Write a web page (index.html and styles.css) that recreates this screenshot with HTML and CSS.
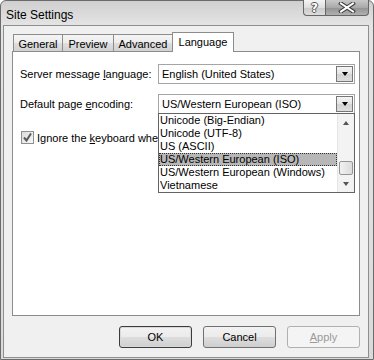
FILE: index.html
```html
<!DOCTYPE html>
<html lang="en">
  <head>
    <meta charset="UTF-8" />
    <meta name="viewport" content="width=device-width, initial-scale=1.0" />
    <title>Site Settings</title>
    <link rel="stylesheet" href="styles.css">
  </head>
  <body>
    <div class="window">
      <div class="titlebar">
        <span class="title">Site Settings</span>
        <div class="caption-buttons">
          <span class="cap help">?</span>
          <span class="cap close">
            <svg width="18" height="11" viewBox="0 0 18 11">
              <path d="M3 1.5 L15 9.5 M15 1.5 L3 9.5" stroke="#3a3a3a" stroke-width="4" stroke-linecap="square" />
              <path d="M3 1.5 L15 9.5 M15 1.5 L3 9.5" stroke="#ffffff" stroke-width="2" stroke-linecap="square" />
            </svg>
          </span>
        </div>
      </div>

      <div class="client">
        <div class="tabs">
          <span class="tab tab-general">General</span>
          <span class="tab tab-preview">Preview</span>
          <span class="tab tab-advanced">Advanced</span>
          <span class="tab tab-language active">Language</span>
        </div>

        <div class="panel">
          <div class="row">
            <label class="label">Server message <u>l</u>anguage:</label>
            <div class="combo">
              <span class="value">English (United States)</span>
              <span class="drop-btn"><span class="arrow"></span></span>
            </div>
          </div>

          <div class="row">
            <label class="label">Default page <u>e</u>ncoding:</label>
            <div class="combo open">
              <span class="value">US/Western European (ISO)</span>
              <span class="drop-btn"><span class="arrow"></span></span>

              <div class="list">
                <div class="items">
                  <div class="item">Unicode (Big-Endian)</div>
                  <div class="item">Unicode (UTF-8)</div>
                  <div class="item">US (ASCII)</div>
                  <div class="item selected">US/Western European (ISO)</div>
                  <div class="item">US/Western European (Windows)</div>
                  <div class="item">Vietnamese</div>
                </div>
                <div class="scrollbar">
                  <span class="sb-btn"><span class="sb-arrow up"></span></span>
                  <span class="sb-track"><span class="sb-thumb"></span></span>
                  <span class="sb-btn"><span class="sb-arrow down"></span></span>
                </div>
              </div>
            </div>
          </div>

          <div class="check-row">
            <span class="checkbox">
              <svg width="11" height="11" viewBox="0 0 11 11">
                <path d="M2 5.5 L4.5 8.5 L9 1.5" fill="none" stroke="#5a5a5a" stroke-width="2" />
              </svg>
            </span>
            <!-- the open list covers the rest of this label -->
            <span class="check-label">Ignore the <u>k</u>eyboard when typing in this page</span>
          </div>
        </div>

        <div class="buttons">
          <button class="btn default">OK</button>
          <button class="btn">Cancel</button>
          <button class="btn" disabled><u>A</u>pply</button>
        </div>
      </div>
    </div>
  </body>
</html>
```

FILE: styles.css
```css
* {
  box-sizing: border-box;
}
body {
  margin: 0;
  background: #fff;
  font-family: "Liberation Sans", Arial, sans-serif;
  font-size: 11px;
  color: #000;
}
.window {
  width: 374px;
  height: 360px;
  border: 1px solid #6b6b6b;
  border-radius: 6px 6px 0 0;
  background: linear-gradient(#cfcfcf, #e4e4e4 24px, #dadada);
  padding: 0 4px 1px 2px;
  display: flex;
  flex-direction: column;
}
.titlebar {
  flex: none;
  height: 24px;
  display: flex;
  align-items: flex-start;
}
.title {
  font-size: 12px;
  line-height: 12px;
  padding: 8px 0 0 3px;
}
.caption-buttons {
  margin-left: auto;
  margin-top: -1px;
  display: flex;
}
.cap {
  height: 16px;
  border: 1px solid #666;
  border-top: none;
  display: flex;
  align-items: center;
  justify-content: center;
}
.help {
  width: 22px;
  border-right: none;
  border-radius: 0 0 0 4px;
  background: linear-gradient(#f4f4f4, #dedede 50%, #c9c9c9 51%, #dcdcdc);
  font-family: "DejaVu Sans", sans-serif;
  font-weight: bold;
  font-size: 12px;
  color: #fff;
  text-shadow: -1px 0 #555, 1px 0 #555, 0 -1px #555, 0 1px #555;
}
.close {
  width: 44px;
  border-radius: 0 0 4px 0;
  background: linear-gradient(#c8c8c8, #a9a9a9 50%, #919191 51%, #b0b0b0);
}
.client {
  flex: 1;
  border: 1px solid #8e8e8e;
  background: #f0f0f0;
  display: flex;
  flex-direction: column;
  padding: 6px 8px 9px;
}
.tabs {
  flex: none;
  display: flex;
  align-items: flex-end;
  height: 19px;
  padding-left: 1px;
}
.tab {
  height: 17px;
  padding-top: 2px;
  line-height: 14px;
  border: 1px solid #8c8c8c;
  border-bottom: none;
  margin-right: -1px;
  text-align: center;
  background: linear-gradient(#f5f5f5, #ececec 50%, #dedede 51%, #d2d2d2);
}
.tab-general { width: 50px; }
.tab-preview { width: 52px; }
.tab-advanced { width: 60px; }
.tab-language { width: 62px; }
.tab.active {
  height: 20px;
  padding-top: 2px;
  margin-bottom: -1px;
  background: #fff;
  position: relative;
  z-index: 1;
}
.panel {
  flex: none;
  height: 265px;
  border: 1px solid #8c8c8c;
  background: #fff;
  padding: 12px 4px 0 7px;
}
.row {
  display: flex;
  align-items: center;
  height: 20px;
}
.row + .row {
  margin-top: 10px;
}
.label {
  width: 138px;
}
.combo {
  position: relative;
  width: 197px;
  height: 20px;
  border: 1px solid #a5a5a5;
  background: #fff;
  display: flex;
  align-items: center;
  padding-left: 3px;
}
.drop-btn {
  margin-left: auto;
  margin-right: 1px;
  width: 17px;
  height: 16px;
  border: 1px solid #777;
  background: linear-gradient(#f4f4f4, #e3e3e3 50%, #d2d2d2 51%, #dddddd);
  display: flex;
  align-items: center;
  justify-content: center;
}
.arrow {
  width: 0;
  height: 0;
  border-left: 3.5px solid transparent;
  border-right: 3.5px solid transparent;
  border-top: 4px solid #000;
}
.list {
  position: absolute;
  left: -1px;
  top: 100%;
  width: 197px;
  border: 1px solid #646464;
  background: #fff;
  display: flex;
  z-index: 2;
}
.items {
  flex: 1;
}
.item {
  height: 13px;
  line-height: 13px;
  padding-left: 1px;
  white-space: nowrap;
}
.item.selected {
  background: #b7b7b7;
  outline: 1px dotted #333;
  outline-offset: -1px;
}
.scrollbar {
  width: 17px;
  display: flex;
  flex-direction: column;
  background: #f3f3f3;
  border-left: 1px solid #e6e6e6;
}
.sb-btn {
  height: 17px;
  display: flex;
  align-items: center;
  justify-content: center;
}
.sb-arrow {
  width: 0;
  height: 0;
  border-left: 3.5px solid transparent;
  border-right: 3.5px solid transparent;
}
.sb-arrow.up {
  border-bottom: 4px solid #555;
}
.sb-arrow.down {
  border-top: 4px solid #555;
}
.sb-track {
  flex: 1;
  display: flex;
  flex-direction: column;
  justify-content: flex-end;
}
.sb-thumb {
  height: 14px;
  margin: 0 1px;
  border: 1px solid #969696;
  border-radius: 2px;
  background: linear-gradient(90deg, #f1f1f1, #dcdcdc);
}
.check-row {
  display: flex;
  align-items: center;
  margin-top: 17px;
  padding-left: 1px;
  white-space: nowrap;
}
.checkbox {
  width: 13px;
  height: 13px;
  border: 1px solid #8f8f8f;
  background: linear-gradient(135deg, #dcdcdc, #f7f7f7);
  display: flex;
  align-items: center;
  justify-content: center;
  margin-right: 3px;
}
.check-label {
  width: 121px;
  overflow: hidden;
}
.buttons {
  flex: none;
  display: flex;
  justify-content: flex-end;
  gap: 11px;
  margin-top: 10px;
}
.btn {
  width: 73px;
  height: 22px;
  border: 1px solid #707070;
  border-radius: 3px;
  background: linear-gradient(#f2f2f2, #ebebeb 50%, #dddddd 51%, #cfcfcf);
  font: inherit;
  color: #000;
  padding: 0;
}
.btn.default {
  border-color: #3c3c3c;
  box-shadow: inset 0 0 0 1px #d8d8d8;
}
.btn:disabled {
  border-color: #b0b0b0;
  background: #f4f4f4;
  color: #9a9a9a;
}
```
